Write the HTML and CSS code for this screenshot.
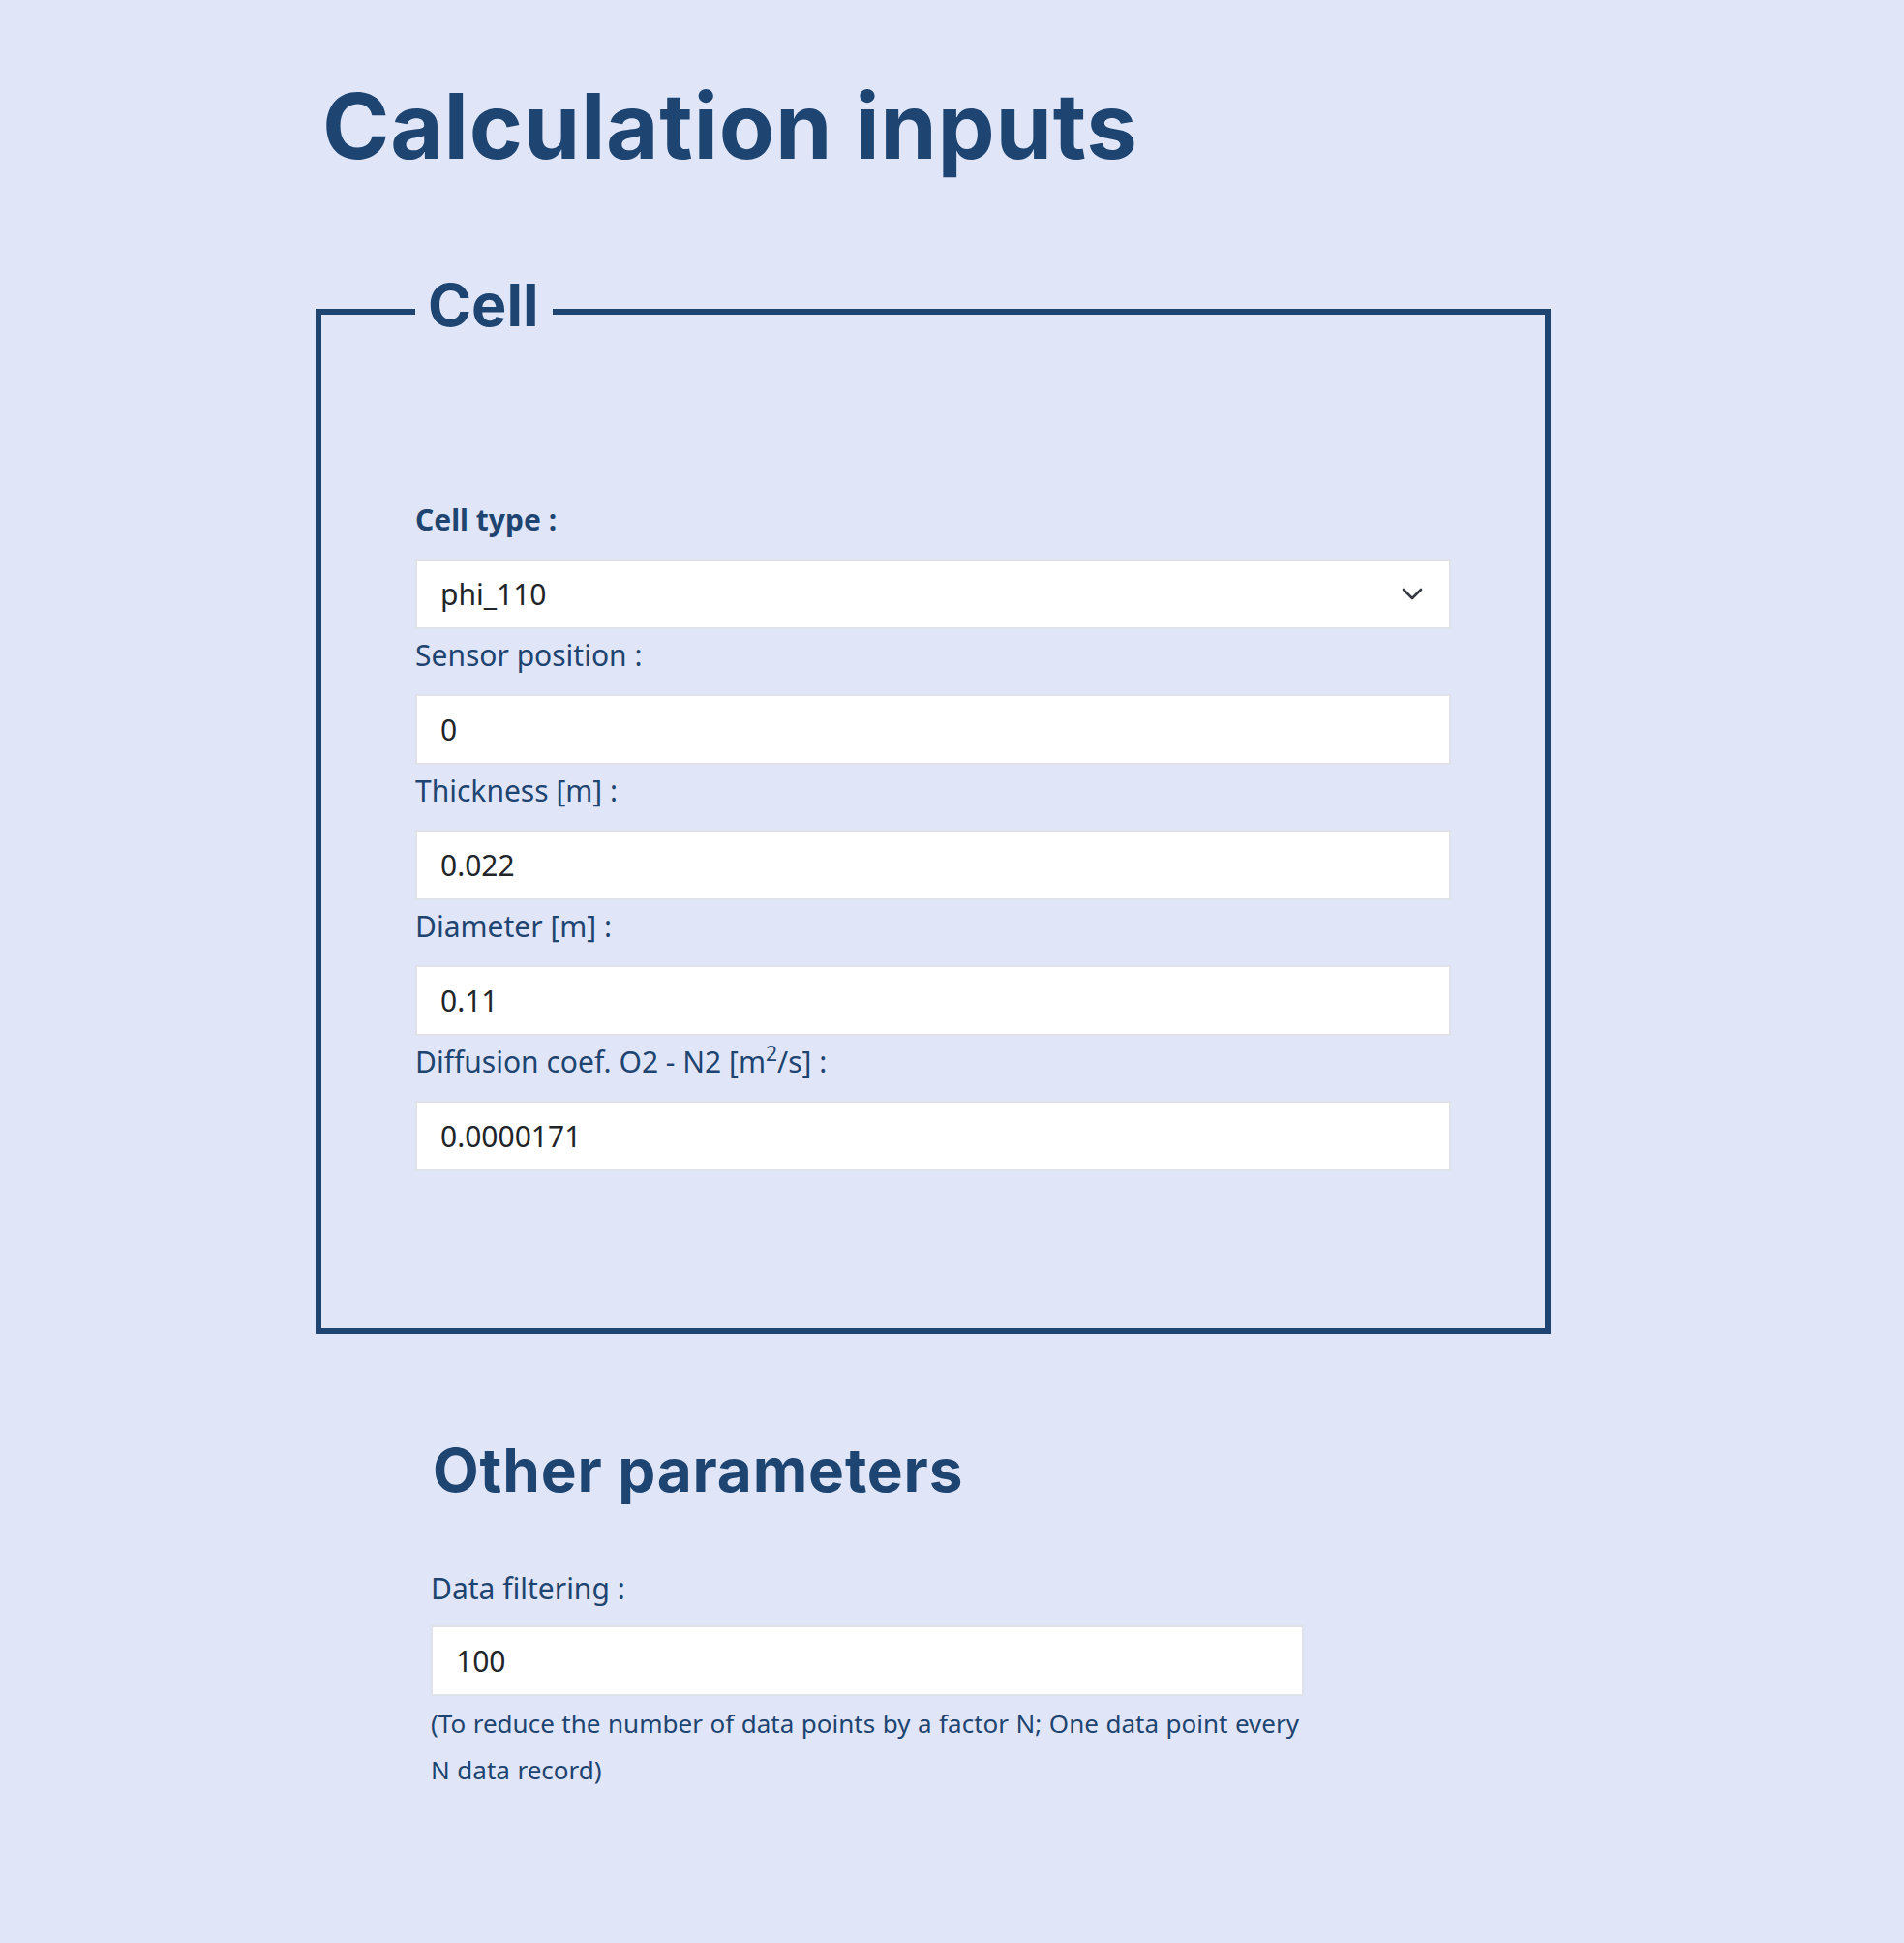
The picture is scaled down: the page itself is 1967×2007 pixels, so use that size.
FILE: index.html
```html
<!DOCTYPE html>
<html lang="en">
<head>
<meta charset="utf-8">
<title>Calculation inputs</title>
<link rel="stylesheet" href="styles.css">
</head>
<body>
<main class="page">
  <h1 class="title">Calculation inputs</h1>

  <fieldset class="cell-box">
    <legend class="cell-legend">Cell</legend>

    <div class="field">
      <label class="field-label field-label--bold" for="cell-type">Cell type :</label>
      <div class="select-wrap">
        <select id="cell-type" class="control control--select">
          <option>phi_110</option>
        </select>
        <svg class="chevron" width="22" height="14" viewBox="0 0 22 14" aria-hidden="true">
          <polyline points="2,2 11,11 20,2" fill="none" stroke="#343a40" stroke-width="2.6" stroke-linecap="round" stroke-linejoin="round"/>
        </svg>
      </div>
    </div>

    <div class="field">
      <label class="field-label" for="sensor">Sensor position :</label>
      <input id="sensor" class="control" type="text" value="0">
    </div>

    <div class="field">
      <label class="field-label" for="thickness">Thickness [m] :</label>
      <input id="thickness" class="control" type="text" value="0.022">
    </div>

    <div class="field">
      <label class="field-label" for="diameter">Diameter [m] :</label>
      <input id="diameter" class="control" type="text" value="0.11">
    </div>

    <div class="field">
      <label class="field-label" for="diffusion">Diffusion coef. O2 - N2 [m<sup class="sup">2</sup>/s] :</label>
      <input id="diffusion" class="control" type="text" value="0.0000171">
    </div>
  </fieldset>

  <section class="other">
    <h2 class="other-title">Other parameters</h2>
    <div class="field">
      <label class="field-label" for="filtering">Data filtering :</label>
      <input id="filtering" class="control" type="text" value="100">
      <p class="help">(To reduce the number of data points by a factor N; One data point every N data record)</p>
    </div>
  </section>
</main>
</body>
</html>
```

FILE: styles.css
```css
html, body {
  margin: 0;
  padding: 0;
}

body {
  background: #e0e6f7;
  color: #1e4471;
  font-family: "Noto Sans", "Open Sans", sans-serif;
  min-height: 2007px;
}

.page {
  width: 1276px;
  margin-left: 326px;
  padding-bottom: 120px;
}

.title {
  font-family: Inter, "Noto Sans", sans-serif;
  font-weight: 700;
  font-size: 94px;
  line-height: 114px;
  letter-spacing: 0.7px;
  margin: 73px 0 0 7px;
  color: #1e4471;
}

.cell-box {
  margin: 90px 0 0 0;
  border: 6px solid #1e4471;
  padding: 150px 97px 162px 97px;
  min-width: 0;
}

.cell-legend {
  font-family: Inter, "Noto Sans", sans-serif;
  font-weight: 700;
  font-size: 61px;
  line-height: 76px;
  padding: 0 14px 14px 13px;
  color: #1e4471;
}

.field {
  display: flex;
  flex-direction: column;
}

.field-label {
  font-size: 30px;
  line-height: 40px;
  padding-top: 7px;
  margin-bottom: 20px;
  color: #1e4471;
}

.field:first-of-type .field-label {
  padding-top: 0;
}

.field-label--bold {
  font-weight: 700;
}

.sup {
  font-size: 0.7em;
  line-height: 0;
  vertical-align: 0.55em;
}

.control {
  box-sizing: border-box;
  width: 100%;
  height: 73px;
  margin: 0;
  border: 2px solid #dfe2e9;
  border-radius: 0;
  background: #ffffff;
  color: #212529;
  font-family: "Noto Sans", "Open Sans", sans-serif;
  font-size: 30px;
  padding: 0 24px;
  outline: none;
}

.control--select {
  appearance: none;
  -webkit-appearance: none;
}

.select-wrap {
  position: relative;
}

.chevron {
  position: absolute;
  right: 29px;
  top: 30px;
  pointer-events: none;
}

.other {
  width: 902px;
  margin: 103px 0 0 119px;
}

.other-title {
  font-family: Inter, "Noto Sans", sans-serif;
  font-weight: 700;
  font-size: 62px;
  line-height: 76px;
  letter-spacing: 0.85px;
  margin: 2px 0 64px 2px;
  color: #1e4471;
}

.other .field-label {
  padding-top: 0;
  margin-bottom: 18px;
}

.help {
  margin: 4px 0 0 0;
  font-size: 26px;
  line-height: 48px;
  word-spacing: 0.8px;
  color: #1e4471;
}
```
